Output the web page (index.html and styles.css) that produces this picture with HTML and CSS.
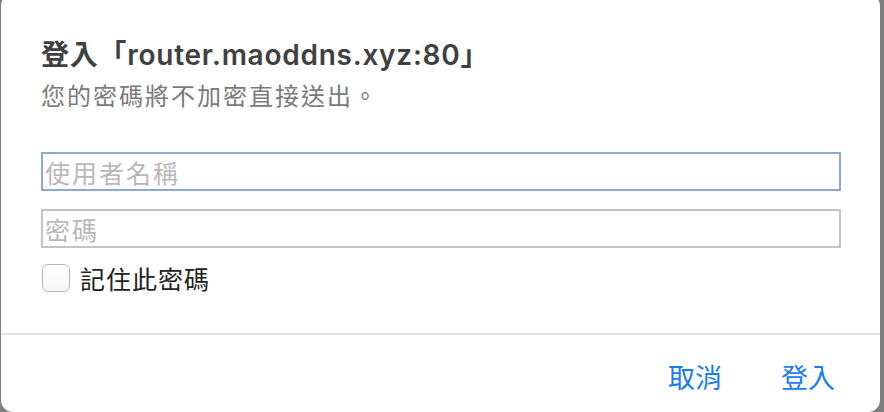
FILE: index.html
```html
<!DOCTYPE html>
<html lang="zh-Hant">
<head>
<meta charset="utf-8">
<link rel="stylesheet" href="styles.css">
</head>
<body>
<div class="dialog">
  <div class="content">
    <h1 class="title">登入「router.maoddns.xyz:80」</h1>
    <p class="subtitle">您的密碼將不加密直接送出。</p>
    <div class="field focused"><span class="placeholder">使用者名稱</span></div>
    <div class="field"><span class="placeholder">密碼</span></div>
    <label class="remember"><span class="checkbox"></span><span class="remember-text">記住此密碼</span></label>
  </div>
  <div class="divider"></div>
  <div class="footer">
    <span class="btn">取消</span>
    <span class="btn">登入</span>
  </div>
</div>
</body>
</html>
```
FILE: styles.css
```css
html, body {
  margin: 0;
  padding: 0;
  background: #7f7f7f;
  height: 412px;
  overflow: hidden;
}
body {
  font-family: "Noto Sans CJK TC", "Liberation Sans", sans-serif;
}
.dialog {
  margin: -6px 4px 0 1px;
  height: 418px;
  background: #ffffff;
  border-radius: 12px;
  display: flex;
  flex-direction: column;
}
.content {
  padding: 44px 39px 0 40px;
  display: flex;
  flex-direction: column;
}
.title {
  margin: 0;
  font-family: "Inter", "Noto Sans CJK TC", sans-serif;
  font-size: 28px;
  line-height: 34px;
  font-weight: 600;
  color: #404040;
  letter-spacing: 0.75px;
}
.subtitle {
  margin: 8px 0 0;
  font-size: 24px;
  line-height: 30px;
  color: #7a7a7a;
  letter-spacing: 2px;
}
.field {
  margin-top: 42px;
  height: 35px;
  border: 2px solid #c4c4c4;
  display: flex;
  align-items: center;
  padding-left: 2px;
}
.field + .field {
  margin-top: 18px;
}
.field.focused {
  border-color: #8fa8d2;
}
.placeholder {
  font-size: 25px;
  line-height: 30px;
  color: #b8b8b8;
  letter-spacing: 2px;
}
.remember {
  margin-top: 16px;
  display: flex;
  align-items: center;
  height: 28px;
  gap: 10px;
}
.checkbox {
  width: 26px;
  height: 26px;
  border: 1px solid #b4b4b4;
  border-radius: 6px;
  background: linear-gradient(#ffffff, #f6f6f6);
  margin-left: 1px;
}
.remember-text {
  font-size: 25px;
  line-height: 30px;
  color: #222222;
  letter-spacing: 1px;
}
.divider {
  margin-top: 41px;
  height: 2px;
  background: #e2e2e2;
}
.footer {
  padding: 27px 45px 0 0;
  display: flex;
  justify-content: flex-end;
  gap: 59px;
}
.btn {
  font-size: 27px;
  line-height: 30px;
  color: #1a7cf4;
}
```
